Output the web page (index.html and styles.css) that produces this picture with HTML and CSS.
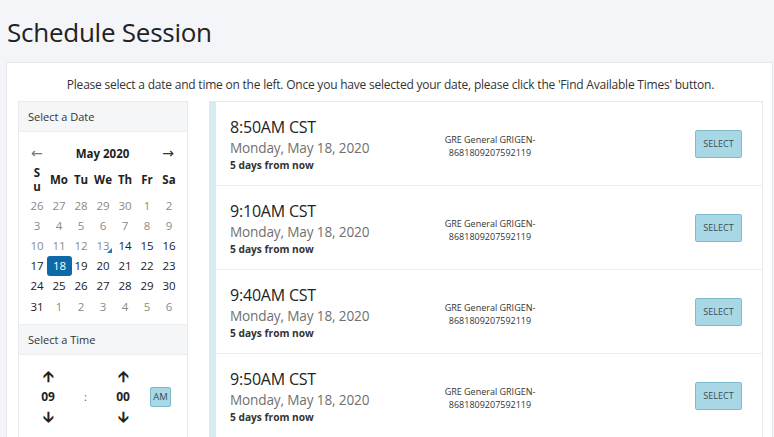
FILE: index.html
```html
<!DOCTYPE html>
<html>
<head>
<meta charset="utf-8">
<link rel="stylesheet" href="styles.css">
</head>
<body>
<h1 class="title">Schedule Session</h1>
<div class="card">
  <p class="intro">Please select a date and time on the left. Once you have selected your date, please click the 'Find Available Times' button.</p>
  <div class="layout">
    <aside class="side">
      <div class="side-head">Select a Date</div>
      <div class="cal">
        <div class="cal-nav"><span class="arrow">&#8592;</span><span class="month">May 2020</span><span class="arrow">&#8594;</span></div>
        <table class="cal-grid">
          <thead>
            <tr><th>S<br>u</th><th>Mo</th><th>Tu</th><th>We</th><th>Th</th><th>Fr</th><th>Sa</th></tr>
          </thead>
          <tbody>
            <tr><td class="off">26</td><td class="off">27</td><td class="off">28</td><td class="off">29</td><td class="off">30</td><td class="off">1</td><td class="off">2</td></tr>
            <tr><td class="off">3</td><td class="off">4</td><td class="off">5</td><td class="off">6</td><td class="off">7</td><td class="off">8</td><td class="off">9</td></tr>
            <tr><td class="off">10</td><td class="off">11</td><td class="off">12</td><td class="off today">13</td><td>14</td><td>15</td><td>16</td></tr>
            <tr><td>17</td><td><span class="sel">18</span></td><td>19</td><td>20</td><td>21</td><td>22</td><td>23</td></tr>
            <tr><td>24</td><td>25</td><td>26</td><td>27</td><td>28</td><td>29</td><td>30</td></tr>
            <tr><td>31</td><td class="off">1</td><td class="off">2</td><td class="off">3</td><td class="off">4</td><td class="off">5</td><td class="off">6</td></tr>
          </tbody>
        </table>
      </div>
      <div class="side-head">Select a Time</div>
      <div class="time">
        <div class="tcol"><span class="tarrow">&#129129;</span><span class="tval">09</span><span class="tarrow">&#129131;</span></div>
        <div class="colon">:</div>
        <div class="tcol"><span class="tarrow">&#129129;</span><span class="tval">00</span><span class="tarrow">&#129131;</span></div>
        <button class="ampm">AM</button>
      </div>
    </aside>
    <section class="list">
      <div class="slot">
        <div class="when"><div class="hour">8:50AM CST</div><div class="day">Monday, May 18, 2020</div><div class="rel">5 days from now</div></div>
        <div class="desc">GRE General GRIGEN-<br>8681809207592119</div>
        <button class="pick">SELECT</button>
      </div>
      <div class="slot">
        <div class="when"><div class="hour">9:10AM CST</div><div class="day">Monday, May 18, 2020</div><div class="rel">5 days from now</div></div>
        <div class="desc">GRE General GRIGEN-<br>8681809207592119</div>
        <button class="pick">SELECT</button>
      </div>
      <div class="slot">
        <div class="when"><div class="hour">9:40AM CST</div><div class="day">Monday, May 18, 2020</div><div class="rel">5 days from now</div></div>
        <div class="desc">GRE General GRIGEN-<br>8681809207592119</div>
        <button class="pick">SELECT</button>
      </div>
      <div class="slot">
        <div class="when"><div class="hour">9:50AM CST</div><div class="day">Monday, May 18, 2020</div><div class="rel">5 days from now</div></div>
        <div class="desc">GRE General GRIGEN-<br>8681809207592119</div>
        <button class="pick">SELECT</button>
      </div>
    </section>
  </div>
</div>
</body>
</html>
```
FILE: styles.css
```css
* { box-sizing: border-box; }
html, body { margin: 0; padding: 0; }
body {
  background: #f4f5f9;
  font-family: "Open Sans", "Noto Sans", sans-serif;
  color: #222;
  overflow: hidden;
  height: 437px;
}
.title {
  margin: 0;
  padding: 15px 0 0 7px;
  font-size: 26px;
  font-weight: 400;
  line-height: 34px;
  color: #222;
  letter-spacing: -0.25px;
}
.card {
  margin: 13px 1px 0 6px;
  background: #fff;
  border: 1px solid #e7e9ed;
  border-bottom: none;
  padding: 0 9px 0 11px;
  height: 375px;
  overflow: hidden;
}
.intro {
  margin: 0;
  padding-top: 13px;
  text-align: center;
  font-size: 12px;
  line-height: 17px;
  color: #333;
  letter-spacing: -0.22px;
}
.layout {
  display: flex;
  gap: 21px;
  margin-top: 8px;
}
.side {
  width: 170px;
  flex: none;
  border: 1px solid #e8eaee;
  border-bottom: none;
  height: 340px;
}
.side-head {
  background: #f5f6f8;
  height: 30px;
  line-height: 30px;
  padding-left: 9px;
  font-size: 11px;
  color: #333;
  border-bottom: 1px solid #eceef1;
}
.cal {
  padding: 9px 7px 8px 7px;
  border-bottom: 1px solid #eceef1;
}
.cal-nav {
  display: flex;
  justify-content: space-between;
  align-items: center;
  height: 24px;
  padding: 0 6px 0 5px;
}
.arrow { font-size: 14px; color: #333; font-family: "DejaVu Sans", sans-serif; }
.arrow:first-child { color: #777; }
.month { font-size: 11.5px; font-weight: 700; color: #222; }
.cal-grid {
  width: 100%;
  border-collapse: collapse;
  table-layout: fixed;
}
.cal-grid th {
  font-size: 11.5px;
  font-weight: 700;
  line-height: 14px;
  height: 30px;
  padding: 0;
  text-align: center;
  color: #222;
}
.cal-grid td {
  font-size: 11.5px;
  height: 20.2px;
  padding: 0;
  text-align: center;
  color: #222;
  position: relative;
}
.cal-grid td.off { color: #8a8a8a; }
.cal-grid td.today::after {
  content: "";
  position: absolute;
  right: 2px;
  bottom: 3px;
  border-left: 5px solid transparent;
  border-bottom: 5px solid #1e78c8;
}
.sel {
  display: block;
  margin: 0 0 0 -1px;
  width: 25px;
  height: 20px;
  line-height: 20px;
  background: #0b6aa7;
  color: #fff;
  border-radius: 3px;
}
.time {
  display: flex;
  align-items: center;
  padding: 11px 0 0 17px;
}
.tcol {
  display: flex;
  flex-direction: column;
  align-items: center;
  width: 24px;
}
.tarrow {
  font-family: "DejaVu Sans", sans-serif;
  font-size: 15px;
  font-weight: 700;
  line-height: 20px;
  height: 20px;
  color: #222;
}
.tval { font-size: 12px; font-weight: 700; line-height: 21px; color: #222; }
.colon { width: 51px; text-align: center; font-size: 11px; color: #555; }
.ampm {
  margin-left: 15px;
  width: 21px;
  height: 20px;
  padding: 0;
  font-family: "Open Sans", sans-serif;
  font-size: 9.5px;
  color: #3a4c55;
  background: #a8d8e6;
  border: 1px solid #79b9ca;
  border-radius: 2px;
}
.list {
  flex: 1;
  border: 1px solid #e8eaee;
  border-left: 7px solid #d5ecf1;
  border-bottom: none;
  height: 340px;
}
.slot {
  display: grid;
  grid-template-columns: 180px 160px 1fr;
  align-items: center;
  height: 84px;
  padding: 0 20px 0 14px;
  border-bottom: 1px solid #eceef1;
}
.hour { font-size: 16px; line-height: 21px; color: #222; letter-spacing: -0.2px; }
.day { font-size: 13.6px; line-height: 19px; color: #707070; font-weight: 400; letter-spacing: -0.15px; }
.rel { font-size: 10.2px; font-weight: 700; line-height: 16px; color: #333; }
.when { padding-top: 2px; }
.desc {
  font-size: 9px;
  line-height: 13px;
  text-align: center;
  color: #333;
  padding-top: 4px;
}
.pick {
  justify-self: end;
  width: 47px;
  height: 28px;
  padding: 0;
  font-family: "Open Sans", sans-serif;
  font-size: 9px;
  color: #3a4c55;
  background: #a8d8e6;
  border: 1px solid #7fbccc;
  border-radius: 2px;
}
```
